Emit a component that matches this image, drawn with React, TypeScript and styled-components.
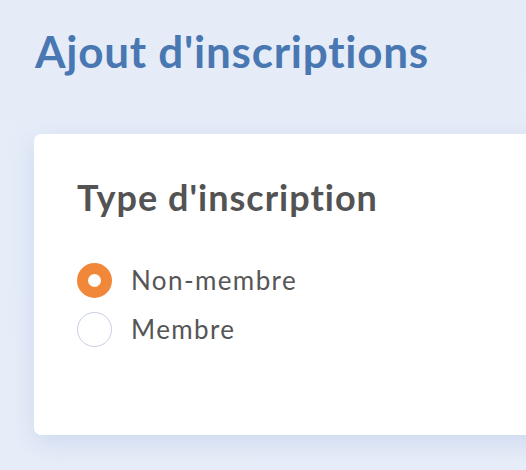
import React from "react";
import styled, { createGlobalStyle } from "styled-components";

const Global = createGlobalStyle`
  html, body { margin: 0; padding: 0; }
  body {
    background: #e6edf8;
    font-family: Lato, "Open Sans", sans-serif;
    font-variant-ligatures: none;
    overflow: hidden;
  }
`;

const Page = styled.div`
  min-height: 470px;
  padding: 27px 0 0 34px;
  box-sizing: border-box;
  overflow: hidden;
  background: linear-gradient(180deg, #e5ecf8 0%, #e7edf8 100%);
`;

const Title = styled.h1`
  margin: 0 0 0 1px;
  font-size: 44px;
  line-height: 48px;
  font-weight: 700;
  color: #4877b2;
  letter-spacing: 0.75px;
`;

const Card = styled.section`
  margin-top: 59px;
  margin-right: -40px;
  height: 301px;
  box-sizing: border-box;
  background: #ffffff;
  border-radius: 7px 0 0 7px;
  box-shadow: 0 8px 24px rgba(120, 150, 215, 0.22);
  padding: 43px 0 0 43px;
`;

const Heading = styled.h2`
  margin: 0;
  font-size: 36px;
  line-height: 40px;
  font-weight: 700;
  color: #535353;
  letter-spacing: 1px;
`;

const Options = styled.div`
  margin-top: 45px;
  display: flex;
  flex-direction: column;
  gap: 13px;
`;

const Option = styled.label`
  display: flex;
  align-items: center;
  gap: 19px;
  height: 36px;
  font-size: 26px;
  line-height: 36px;
  letter-spacing: 1.4px;
  color: #565656;
  cursor: pointer;
`;

const Dot = styled.span<{ $checked?: boolean }>`
  width: 35px;
  height: 35px;
  box-sizing: border-box;
  border-radius: 50%;
  flex: none;
  background: #ffffff;
  border: ${(p) => (p.$checked ? "11px solid #f08739" : "1px solid #c7cfe0")};
`;

export default function App() {
  const [value, setValue] = React.useState("non");
  return (
    <>
      <Global />
      <Page>
        <Title>Ajout d'inscriptions</Title>
        <Card>
          <Heading>Type d'inscription</Heading>
          <Options>
            <Option onClick={() => setValue("non")}>
              <Dot $checked={value === "non"} />
              Non-membre
            </Option>
            <Option onClick={() => setValue("membre")}>
              <Dot $checked={value === "membre"} />
              Membre
            </Option>
          </Options>
        </Card>
      </Page>
    </>
  );
}
